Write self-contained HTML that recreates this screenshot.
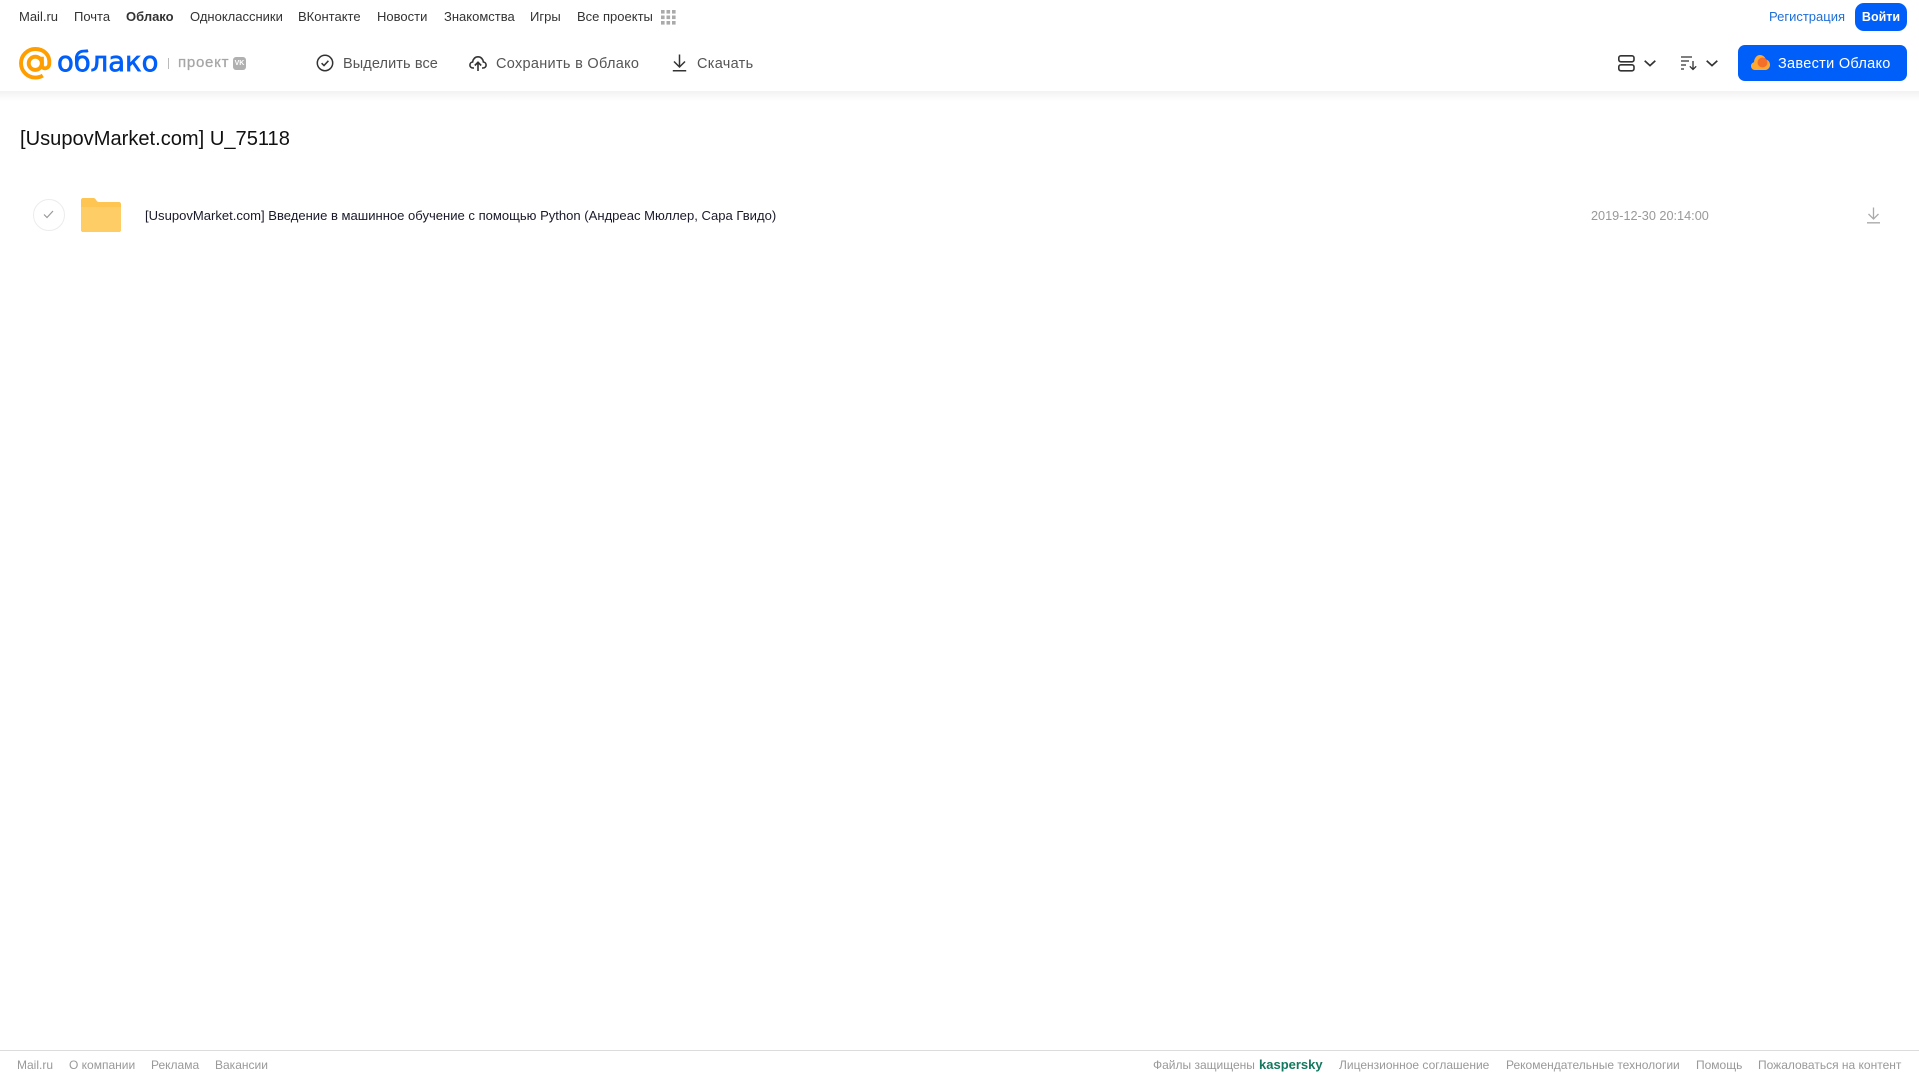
<!DOCTYPE html>
<html lang="ru">
<head>
<meta charset="utf-8">
<title>Облако</title>
<style>
html,body{margin:0;padding:0;background:#fff;width:1919px;height:1079px;overflow:hidden}
body{position:relative;font-family:"Liberation Sans",Arial,sans-serif;color:#333}
.t{position:absolute;white-space:nowrap;line-height:16px;height:16px}
.n{font-size:13px;top:9px;color:#333}
.b{font-size:14.5px;top:56px;color:#555;letter-spacing:.3px}
.f{font-size:12px;top:1057px;color:#999}
svg{position:absolute;overflow:visible}
</style>
</head>
<body>
<div style="position:absolute;left:0;top:91px;width:1919px;height:10px;background:linear-gradient(#f2f2f2,#fff)"></div>

<span class="t n" style="left:19px">Mail.ru</span>
<span class="t n" style="left:74px">Почта</span>
<span class="t n" style="left:126px;font-weight:bold">Облако</span>
<span class="t n" style="left:190px">Одноклассники</span>
<span class="t n" style="left:298px">ВКонтакте</span>
<span class="t n" style="left:377px">Новости</span>
<span class="t n" style="left:444px">Знакомства</span>
<span class="t n" style="left:530px">Игры</span>
<span class="t n" style="left:577px">Все проекты</span>
<svg style="left:661px;top:10px" width="15" height="15" fill="#aaa">
<rect x="0" y="0" width="3.6" height="3.6"/><rect x="5.5" y="0" width="3.6" height="3.6"/><rect x="11" y="0" width="3.6" height="3.6"/>
<rect x="0" y="5.5" width="3.6" height="3.6"/><rect x="5.5" y="5.5" width="3.6" height="3.6"/><rect x="11" y="5.5" width="3.6" height="3.6"/>
<rect x="0" y="11" width="3.6" height="3.6"/><rect x="5.5" y="11" width="3.6" height="3.6"/><rect x="11" y="11" width="3.6" height="3.6"/>
</svg>

<span class="t n" style="left:1769px;color:#1f6fd6">Регистрация</span>
<div style="position:absolute;left:1855px;top:3px;width:52px;height:28px;border-radius:9px;background:#005ff9;color:#fff;font-size:12.5px;font-weight:bold;line-height:28px;text-align:center">Войти</div>

<svg style="left:19px;top:47px" width="33" height="33" viewBox="0 0 33 33" fill="none" stroke="#ff9e00" stroke-width="3.9">
<circle cx="16.3" cy="16.3" r="6.6"/>
<path d="M22.9 9.7V18.5C22.9 22.5 29.8 22.5 30.3 17C31.2 7.5 24.5 2 16.3 2C8.4 2 2 8.4 2 16.3C2 24.2 8.4 30.6 16.3 30.6C19.2 30.6 21.6 29.9 23.8 28.6"/>
</svg>
<span class="t" style="left:57px;top:44px;height:36px;line-height:36px;font-family:'DejaVu Sans',sans-serif;font-size:27.5px;color:#005ff9;letter-spacing:-.05px;-webkit-text-stroke:.7px #005ff9">облако</span>
<div style="position:absolute;left:168px;top:58px;width:1px;height:11px;background:#bbb"></div>
<span class="t" style="left:178px;top:55px;font-size:15px;color:#a6a6a6;letter-spacing:.75px;-webkit-text-stroke:.25px #a6a6a6">проект</span>
<div style="position:absolute;left:233px;top:57px;width:13px;height:13px;border-radius:3px;background:#b0b0b0;color:#fff;font-size:7px;font-weight:bold;line-height:13px;text-align:center">VK</div>

<svg style="left:316px;top:54px" width="18" height="18" viewBox="0 0 18 18" fill="none" stroke="#333" stroke-width="1.5">
<circle cx="9" cy="9" r="7.7"/><path d="M5.6 9.2L8 11.5L12.4 6.8"/>
</svg>
<span class="t b" style="left:343px;letter-spacing:.1px">Выделить все</span>

<svg style="left:469px;top:54px" width="18" height="18" viewBox="0 0 18 18" fill="none" stroke="#333" stroke-width="1.6">
<path d="M5 14H4C2 14 .9 12.6 .9 11C.9 9.4 2 8.2 3.6 8C4 4.9 6.2 2.8 9 2.8C11.8 2.8 14 4.9 14.4 8C16 8.2 17.1 9.4 17.1 11C17.1 12.6 16 14 14 14H13"/>
<path d="M9 17V8.5M5.8 11.5L9 8.3L12.2 11.5"/>
</svg>
<span class="t b" style="left:496px">Сохранить в Облако</span>

<svg style="left:672px;top:54px" width="15" height="18" viewBox="0 0 15 18" fill="none" stroke="#333" stroke-width="1.5">
<path d="M7.5 .5V12.5M2 7.5L7.5 13L13 7.5M.8 16.8H14.2"/>
</svg>
<span class="t b" style="left:697px">Скачать</span>

<svg style="left:1618px;top:55px" width="17" height="17" viewBox="0 0 17 17" fill="none" stroke="#333" stroke-width="1.6">
<rect x=".8" y=".8" width="15.2" height="6" rx="2"/><rect x=".8" y="9.8" width="15.2" height="6" rx="2"/>
</svg>
<svg style="left:1644px;top:60px" width="12" height="7" viewBox="0 0 12 7" fill="none" stroke="#333" stroke-width="1.7"><path d="M.7 .8L6 5.6L11.3 .8"/></svg>
<svg style="left:1681px;top:56px" width="16" height="15" viewBox="0 0 16 15" fill="none" stroke="#333" stroke-width="1.3">
<path d="M0 1H11M0 5H8M0 9H5M0 13H3M12 5V13.5M8.8 10.3L12 13.5L15.2 10.3"/>
</svg>
<svg style="left:1706px;top:60px" width="12" height="7" viewBox="0 0 12 7" fill="none" stroke="#333" stroke-width="1.7"><path d="M.7 .8L6 5.6L11.3 .8"/></svg>

<div style="position:absolute;left:1738px;top:45px;width:169px;height:36px;border-radius:7px;background:#005ff9"></div>
<svg style="left:1751px;top:54px" width="19" height="16" viewBox="0 0 19 16">
<path d="M4 16C1.800 16 0 14.300 0 12C0 10 1.400 8.500 3 8.200C3.300 4 5.800 1 9 1C11.800 1 14 2.800 14.800 5.500C17.200 6 19 8 19 10.700C19 13.700 16.800 16 14 16Z" fill="#ffa930"/>
<circle cx="11.500" cy="8.500" r="5" fill="#f4702a"/>
</svg>
<span class="t" style="left:1778px;top:56px;font-size:14.500px;color:#fff;letter-spacing:.3px">Завести Облако</span>

<div class="t" style="left:20px;top:127px;height:24px;line-height:24px;font-size:20.100px;color:#111">[UsupovMarket.com] U_75118</div>

<div style="position:absolute;left:33px;top:199px;width:30px;height:30px;border:1px solid #ececec;border-radius:50%"></div>
<svg style="left:43px;top:210px" width="11" height="9" viewBox="0 0 11 9" fill="none" stroke="#999" stroke-width="1.200"><path d="M1 4.500L4 7.500L10 1"/></svg>
<svg style="left:81px;top:198px" width="40" height="34" viewBox="0 0 40 34">
<path d="M2 0H12C14 0 14.500 1 15.500 2.500C16 3.300 16.500 4 18 4H38C39.100 4 40 4.900 40 6V32C40 33.100 39.100 34 38 34H2C.9 34 0 33.100 0 32V2C0 .9 .9 0 2 0Z" fill="#ffc553"/>
<path d="M0 9H40V32C40 33.100 39.100 34 38 34H2C.9 34 0 33.100 0 32Z" fill="#ffcd66"/>
</svg>
<span class="t" style="left:145px;top:208px;font-size:13.060px;color:#1a1a2a">[UsupovMarket.com] Введение в машинное обучение с помощью Python (Андреас Мюллер, Сара Гвидо)</span>
<span class="t" style="left:1591px;top:208px;font-size:12.700px;color:#999">2019-12-30 20:14:00</span>
<svg style="left:1867px;top:207px" width="13" height="17" viewBox="0 0 13 17" fill="none" stroke="#aaa" stroke-width="1.300">
<path d="M6.500 .5V11.500M1.500 7L6.500 12L11.500 7M0 15.800H13"/>
</svg>

<div style="position:absolute;left:0;top:1050px;width:1919px;height:1px;background:#dcdcdc"></div>
<span class="t f" style="left:17px">Mail.ru</span>
<span class="t f" style="left:69px">О компании</span>
<span class="t f" style="left:151px">Реклама</span>
<span class="t f" style="left:215px">Вакансии</span>
<span class="t f" style="left:1153px">Файлы защищены</span>
<span class="t f" style="left:1259px;font-size:13px;font-weight:bold;color:#14785f">kaspersky</span>
<span class="t f" style="left:1339px">Лицензионное соглашение</span>
<span class="t f" style="left:1506px">Рекомендательные технологии</span>
<span class="t f" style="left:1696px">Помощь</span>
<span class="t f" style="left:1758px">Пожаловаться на контент</span>
</body>
</html>
